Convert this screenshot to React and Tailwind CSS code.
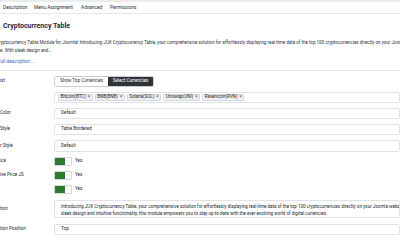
export default function App() {
  const tags = ["Bitcoin(BTC)", "BNB(BNB)", "Solana(SOL)", "Uniswap(UNI)", "Ravencoin(RVN)"];
  const Input = ({ children, h = "h-[11px]" }) => (
    <div className={`${h} w-[370px] border border-[#dfe2e6] rounded-[2px] flex items-center pl-[6px] text-[4.6px] text-[#22262a] whitespace-nowrap`}>
      {children}
    </div>
  );
  const Toggle = () => (
    <div className="flex items-center">
      <div className="flex h-[9px] w-[18px] border border-[#d3d6da] rounded-[1px] overflow-hidden">
        <div className="w-[10px] h-full bg-[#2e7a31]" />
        <div className="flex-1 bg-white" />
      </div>
      <span className="ml-[3px] text-[4.6px] text-[#22262a]">Yes</span>
    </div>
  );
  const Row = ({ label, mt, children }) => (
    <div className={`flex items-center ${mt}`}>
      <div className="w-[54px] shrink-0 text-[4.6px] text-[#22262a] whitespace-nowrap overflow-hidden">{label}</div>
      {children}
    </div>
  );
  return (
    <div className="w-[400px] h-[240px] overflow-hidden bg-white font-['Roboto',sans-serif] text-[#22262a]">
      <div className="h-[2px] bg-[#e9edf1]" />
      <div className="h-[12px] border-b border-[#e5e8ec] flex items-center text-[4.8px] text-[#2b2f33] whitespace-nowrap">
        <span className="ml-[3px] w-[31px]">Description</span>
        <span className="w-[47px]">Menu Assignment</span>
        <span className="w-[29px]">Advanced</span>
        <span>Permissions</span>
      </div>
      <div className="mt-[8px] ml-[3px] text-[7px] leading-[9px] font-bold text-[#1c2a48] whitespace-nowrap">Cryptocurrency Table</div>
      <div className="mt-[8px] ml-[-4px] text-[4.5px] leading-[8px] text-[#333] whitespace-nowrap">
        <div>Cryptocurrency Table Module for Joomla! Introducing JUX Cryptocurrency Table, your comprehensive solution for effortlessly displaying real-time data of the top 100 cryptocurrencies directly on your Joomla website.</div>
        <div className="ml-[4px]">e. With sleek design and...</div>
      </div>
      <div className="mt-[3px] ml-[-2px] text-[4.7px] leading-[8px] text-[#2a68b5] whitespace-nowrap">Full description ...</div>
      <div className="mt-[4px] border-t border-[#e6e8eb]" />

      <Row label="ist" mt="mt-[5px]">
        <div className="flex h-[11px] border border-[#c9cdd1] rounded-[2px] overflow-hidden text-[4.6px] whitespace-nowrap">
          <div className="w-[53px] flex items-center justify-center bg-white text-[#2b2f33]">Show Top Currencies</div>
          <div className="w-[45px] flex items-center justify-center bg-[#30343a] text-white">Select Currencies</div>
        </div>
      </Row>
      <Row label="" mt="mt-[5px]">
        <div className="h-[11px] w-[370px] border border-[#dfe2e6] rounded-[2px] flex items-center pl-[3px] gap-[2px] text-[4.5px] text-[#22262a] whitespace-nowrap">
          {tags.map((t) => (
            <span key={t} className="h-[7px] flex items-center px-[1.5px] bg-[#eef0f2] border border-[#d4d7db] rounded-[1px]">
              {t}<span className="ml-[2px] text-[#555]">×</span>
            </span>
          ))}
        </div>
      </Row>
      <Row label="Color" mt="mt-[5px]"><Input>Default</Input></Row>
      <Row label="Style" mt="mt-[5px]"><Input>Table Bordered</Input></Row>
      <Row label="r Style" mt="mt-[5px]"><Input h="h-[12px]">Default</Input></Row>
      <Row label="ice" mt="mt-[5px]"><Toggle /></Row>
      <Row label="ive Price JS" mt="mt-[5px]"><Toggle /></Row>
      <Row label="" mt="mt-[5px]"><Toggle /></Row>
      <Row label="tion" mt="mt-[6px]">
        <div className="h-[18px] w-[370px] border border-[#dfe2e6] rounded-[2px] pl-[6px] pt-[2px] text-[4.5px] leading-[7px] text-[#22262a] whitespace-nowrap overflow-hidden">
          <div>Introducing JUX Cryptocurrency Table, your comprehensive solution for effortlessly displaying real-time data of the top 100 cryptocurrencies directly on your Joomla website.</div>
          <div>sleek design and intuitive functionality, this module empowers you to stay up-to-date with the ever-evolving world of digital currencies.</div>
        </div>
      </Row>
      <Row label="tion Position" mt="mt-[6px]"><Input>Top</Input></Row>
    </div>
  );
}
